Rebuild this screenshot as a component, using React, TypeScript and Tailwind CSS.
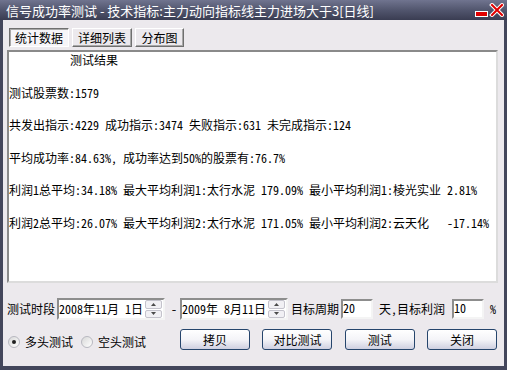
const MONO = "[font-family:'Noto_Sans_Mono_CJK_SC','Noto_Sans_CJK_SC',monospace]";

function TitleBar() {
  return (
    <div className="h-[20px] flex items-center bg-gradient-to-b from-[#70748f] via-[#52566e] to-[#3a3d52] pl-[6px] pr-[3px]">
      <span className="text-white text-[13px] leading-none whitespace-nowrap [font-family:'Noto_Sans_CJK_SC',sans-serif]">
        信号成功率测试 - 技术指标:主力动向指标线主力进场大于3[日线]
      </span>
      <svg className="ml-auto" width="29" height="14" viewBox="0 0 29 14">
        <rect x="0.5" y="8.5" width="12" height="5" fill="#e00000" stroke="#ffffff" strokeWidth="1" />
        <path d="M17 2 L27 12 M27 2 L17 12" stroke="#ffffff" strokeWidth="4" strokeLinecap="square" />
        <path d="M17 2 L27 12 M27 2 L17 12" stroke="#e00000" strokeWidth="2" strokeLinecap="square" />
      </svg>
    </div>
  );
}

function Tab({ label, active, w }: { label: string; active?: boolean; w: string }) {
  return (
    <div
      className={
        "h-[19px] flex items-center justify-center border " +
        w +
        " " +
        (active
          ? "bg-[#f6f5f8] border-t-[#6f6f6f] border-l-[#6f6f6f] border-r-white border-b-white shadow-[inset_1px_1px_0_#a8a8a8]"
          : "bg-[#ece9ed] border-t-white border-l-white border-r-[#6f6f6f] border-b-[#6f6f6f] shadow-[inset_-1px_-1px_0_#a8a8a8]")
      }
    >
      {label}
    </div>
  );
}

function Spinner() {
  return (
    <div className="w-[17px] h-[18px] flex flex-col gap-[1px] mr-[1px]">
      <div className="flex-1 flex items-center justify-center bg-[#f1f0f4] border border-[#c4c3cc] rounded-[2px]">
        <svg width="5" height="3" viewBox="0 0 5 3"><path d="M0 3 L2.5 0 L5 3 Z" fill="#4a4a4a" /></svg>
      </div>
      <div className="flex-1 flex items-center justify-center bg-[#f1f0f4] border border-[#c4c3cc] rounded-[2px]">
        <svg width="5" height="3" viewBox="0 0 5 3"><path d="M0 0 L2.5 3 L5 0 Z" fill="#4a4a4a" /></svg>
      </div>
    </div>
  );
}

function DateBox({ value }: { value: string }) {
  return (
    <div className="w-[108px] h-[22px] flex items-center bg-white border-2 border-t-[#8d8d8d] border-l-[#8d8d8d] border-r-[#f4f4f4] border-b-[#f4f4f4]">
      <span className="whitespace-pre flex-1">{value}</span>
      <Spinner />
    </div>
  );
}

function NumBox({ value }: { value: string }) {
  return (
    <div className="w-[32px] h-[20px] flex items-start bg-white border-2 border-t-[#8d8d8d] border-l-[#8d8d8d] border-r-[#f4f4f4] border-b-[#f4f4f4]">
      <span className="leading-[14px]">{value}</span>
    </div>
  );
}

function Radio({ checked, label }: { checked?: boolean; label: string }) {
  return (
    <div className="flex items-center gap-[5px]">
      <div className="w-[12px] h-[12px] rounded-full bg-gradient-to-br from-[#d8d8d8] to-white border border-[#b8b8c0] flex items-center justify-center">
        {checked && <div className="w-[4px] h-[4px] rounded-full bg-[#202020]" />}
      </div>
      <span>{label}</span>
    </div>
  );
}

function Btn({ label }: { label: string }) {
  return (
    <button className="w-[70px] h-[21px] flex items-center justify-center rounded-[3px] border border-[#26456c] bg-gradient-to-b from-white via-[#f4f4f8] to-[#cfd0e0]">
      {label}
    </button>
  );
}

const lines = [
  "测试股票数:1579",
  "共发出指示:4229 成功指示:3474 失败指示:631 未完成指示:124",
  "平均成功率:84.63%, 成功率达到50%的股票有:76.7%",
  "利润1总平均:34.18% 最大平均利润1:太行水泥 179.09% 最小平均利润1:棱光实业 2.81%",
  "利润2总平均:26.07% 最大平均利润2:太行水泥 171.05% 最小平均利润2:云天化   -17.14%",
];

export default function App() {
  return (
    <div className={"w-[507px] h-[370px] bg-[#43465b] flex flex-col text-[12px] text-black " + MONO}>
      <TitleBar />
      <div className="flex-1 mx-[3px] mb-[4px] bg-[#ece9ed] flex flex-col">
        <div className="mt-[8px] ml-[6px] flex gap-[3px]">
          <Tab label="统计数据" active w="w-[60px]" />
          <Tab label="详细列表" w="w-[60px]" />
          <Tab label="分布图" w="w-[49px]" />
        </div>

        <div className="mt-[3px] ml-[4px] mr-[6px] h-[233px] bg-white border-2 border-t-[#8a8a8a] border-l-[#8a8a8a] border-r-[#dcdcdc] border-b-[#dcdcdc] flex flex-col gap-[16.5px]">
          <div className="h-[16px] flex items-center pl-[61px]">测试结果</div>
          {lines.map((l) => (
            <div key={l} className="h-[16px] flex items-center whitespace-pre">
              {l}
            </div>
          ))}
        </div>

        <div className="mt-[15px] h-[22px] flex items-center pl-[4px]">
          <span className="w-[50px]">测试时段</span>
          <DateBox value="2008年11月 1日" />
          <span className="ml-[6px] mr-[3px] w-[6px]">-</span>
          <DateBox value="2009年 8月11日" />
          <span className="ml-[3px]">目标周期</span>
          <div className="ml-[2px]">
            <NumBox value="20" />
          </div>
          <span className="ml-[6px] w-[67px] whitespace-pre">天,目标利润</span>
          <div className="ml-[6px]">
            <NumBox value="10" />
          </div>
          <span className="ml-[6px]">%</span>
        </div>

        <div className="mt-[9px] h-[21px] flex items-center pl-[5px]">
          <div className="flex items-center gap-[8px] mt-[5px]">
            <Radio checked label="多头测试" />
            <Radio label="空头测试" />
          </div>
          <div className="ml-auto mr-[7px] flex gap-[12.3px]">
            <Btn label="拷贝" />
            <Btn label="对比测试" />
            <Btn label="测试" />
            <Btn label="关闭" />
          </div>
        </div>
      </div>
    </div>
  );
}
